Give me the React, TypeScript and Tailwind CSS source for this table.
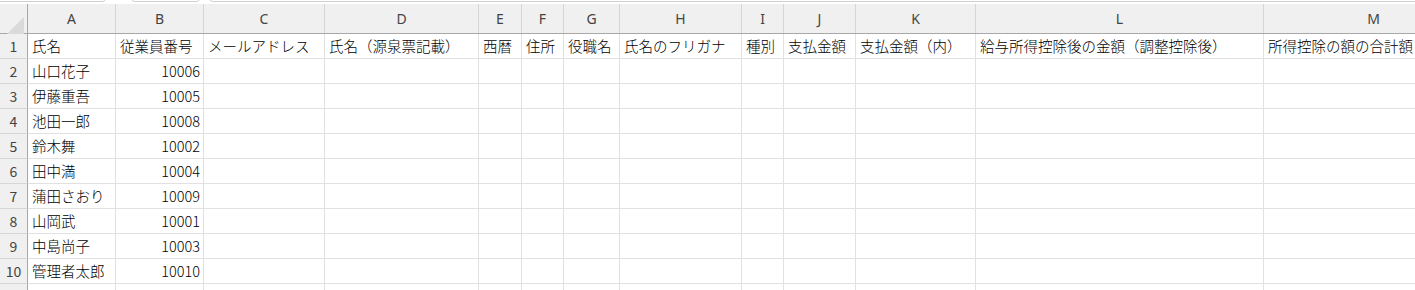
import React from "react";

const cols: { key: string; w: number }[] = [
  { key: "A", w: 88 },
  { key: "B", w: 88 },
  { key: "C", w: 121 },
  { key: "D", w: 154 },
  { key: "E", w: 43 },
  { key: "F", w: 42 },
  { key: "G", w: 56 },
  { key: "H", w: 122 },
  { key: "I", w: 42 },
  { key: "J", w: 72 },
  { key: "K", w: 120 },
  { key: "L", w: 288 },
  { key: "M", w: 220 },
];

const headers = [
  "氏名",
  "従業員番号",
  "メールアドレス",
  "氏名（源泉票記載）",
  "西暦",
  "住所",
  "役職名",
  "氏名のフリガナ",
  "種別",
  "支払金額",
  "支払金額（内）",
  "給与所得控除後の金額（調整控除後）",
  "所得控除の額の合計額",
];

const data: [string, string][] = [
  ["山口花子", "10006"],
  ["伊藤重吾", "10005"],
  ["池田一郎", "10008"],
  ["鈴木舞", "10002"],
  ["田中満", "10004"],
  ["蒲田さおり", "10009"],
  ["山岡武", "10001"],
  ["中島尚子", "10003"],
  ["管理者太郎", "10010"],
];

const font = { fontFamily: '"Noto Sans CJK JP", "Noto Sans", sans-serif' };

function Row({ num, cells }: { num: number | null; cells: (string | null)[] }) {
  return (
    <div className="flex h-[25px] shrink-0">
      <div className="w-[28px] shrink-0 h-full bg-[#f0f0f0] border-r border-r-[#a8a8a8] border-b border-b-[#d6d6d6] flex items-center justify-center text-[14px] text-[#444]">
        {num}
      </div>
      {cols.map((c, i) => {
        const v = cells[i];
        const right = i === 1 && num !== 1;
        return (
          <div
            key={c.key}
            style={{ width: c.w }}
            className={`shrink-0 h-full border-r border-b border-[#e1e1e1] flex items-center overflow-visible whitespace-nowrap text-[14.5px] font-light text-black ${
              right ? "justify-end pr-[3px]" : "pl-[4px]"
            }`}
          >
            {v}
          </div>
        );
      })}
    </div>
  );
}

export default function App() {
  return (
    <div className="w-[1415px] h-[290px] overflow-hidden bg-white flex flex-col" style={font}>
      <div className="h-[4px] shrink-0 flex items-start relative">
        <div className="absolute left-[-10px] top-[-6px] w-[117px] h-[8px] border border-[#cfcfcf] rounded-b-[5px] bg-white" />
        <div className="absolute left-[130px] top-[-6px] w-[71px] h-[8px] border border-[#cfcfcf] rounded-b-[5px] bg-white" />
        <div className="absolute left-[208px] top-[-6px] w-[1230px] h-[8px] border border-[#cfcfcf] rounded-b-[5px] bg-white" />
      </div>
      <div className="flex h-[30px] shrink-0 bg-[#f0f0f0] border-b border-b-[#a8a8a8]">
        <div className="w-[28px] shrink-0 h-full border-r border-r-[#a8a8a8] relative">
          <svg className="absolute left-[7px] top-[13px]" width="18" height="17" viewBox="0 0 18 17">
            <polygon points="17,0 17,17 0,17" fill="#dadada" />
          </svg>
        </div>
        {cols.map((c) => (
          <div
            key={c.key}
            style={{ width: c.w }}
            className="shrink-0 h-full border-r border-r-[#d6d6d6] flex items-center justify-center text-[14px] text-[#444]"
          >
            <span style={{ fontFamily: '"Noto Sans", sans-serif' }}>{c.key}</span>
          </div>
        ))}
      </div>
      <Row num={1} cells={headers} />
      {data.map((d, i) => (
        <Row key={i} num={i + 2} cells={[d[0], d[1]]} />
      ))}
      <Row num={null} cells={[]} />
    </div>
  );
}
